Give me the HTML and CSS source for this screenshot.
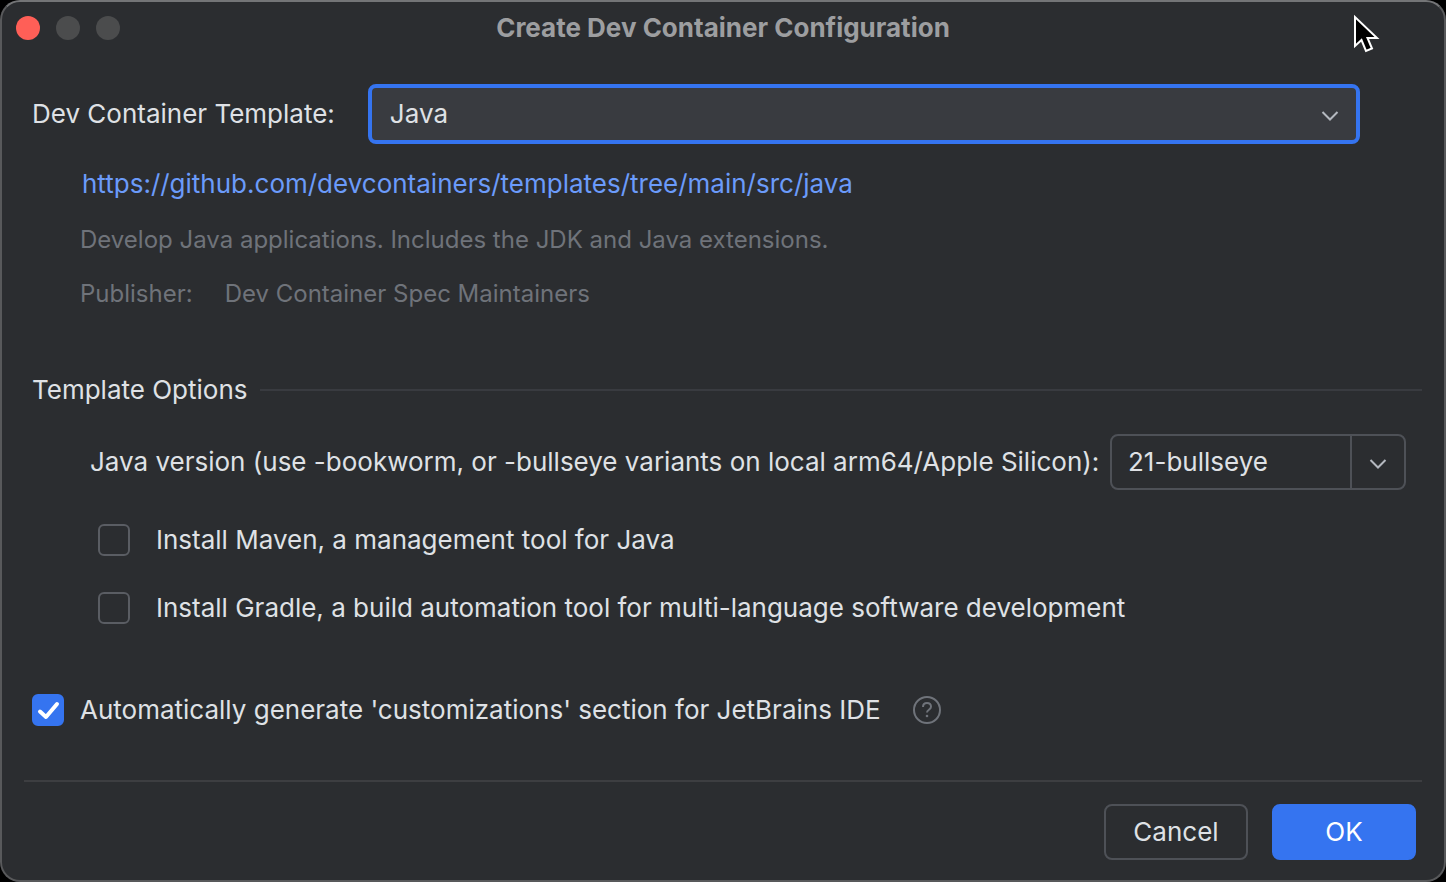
FILE: index.html
```html
<!DOCTYPE html>
<html lang="en">
<head>
  <meta charset="UTF-8">
  <meta name="viewport" content="width=device-width, initial-scale=1.0">
  <title>Create Dev Container Configuration</title>
  <link rel="stylesheet" href="styles.css">
</head>
<body>
  <form class="dialog">
    <header class="titlebar">
      <div class="lights">
        <button type="button" class="light close" aria-label="Close"></button>
        <button type="button" class="light" aria-label="Minimize" disabled></button>
        <button type="button" class="light" aria-label="Zoom" disabled></button>
      </div>
      <h1>Create Dev Container Configuration</h1>
    </header>

    <main class="content">
      <div class="template-row">
        <label for="template">Dev Container Template:</label>
        <div class="combo focused">
          <select id="template">
            <option>Java</option>
          </select>
          <span class="arrow">
            <svg width="18" height="12" viewBox="0 0 18 12"><path d="M1.500 2l7.500 7.500 7.500-7.500"/></svg>
          </span>
        </div>
      </div>

      <div class="details">
        <a href="https://github.com/devcontainers/templates/tree/main/src/java">https://github.com/devcontainers/templates/tree/main/src/java</a>
        <p>Develop Java applications. Includes the JDK and Java extensions.</p>
        <p class="publisher"><span>Publisher:</span><span>Dev Container Spec Maintainers</span></p>
      </div>

      <h2>Template Options</h2>

      <div class="options">
        <div class="version-row">
          <label for="version">Java version (use -bookworm, or -bullseye variants on local arm64/Apple Silicon):</label>
          <div class="combo split">
            <select id="version">
              <option>21-bullseye</option>
            </select>
            <span class="arrow">
              <svg width="18" height="12" viewBox="0 0 18 12"><path d="M1.500 2l7.500 7.500 7.500-7.500"/></svg>
            </span>
          </div>
        </div>
        <div class="check-row">
          <input type="checkbox" id="maven">
          <label for="maven">Install Maven, a management tool for Java</label>
        </div>
        <div class="check-row">
          <input type="checkbox" id="gradle">
          <label for="gradle">Install Gradle, a build automation tool for multi-language software development</label>
        </div>
      </div>

      <div class="check-row customizations">
        <span class="tick-box">
          <input type="checkbox" id="customizations" checked>
          <svg class="tick" width="32" height="32" viewBox="0 0 32 32"><path d="M8 17.500l6 5.500L25 10"/></svg>
        </span>
        <label for="customizations">Automatically generate 'customizations' section for JetBrains IDE</label>
        <button type="button" class="help" aria-label="Help">
          <svg width="28" height="28" viewBox="0 0 28 28">
            <circle cx="14" cy="14" r="13"/>
            <path d="M10 11c0-2.400 1.700-4 4-4s4 1.500 4 3.700c0 3-4 3.100-4 5.800"/>
            <circle class="dot" cx="14" cy="20" r="1.300"/>
          </svg>
        </button>
      </div>
    </main>

    <footer class="footer">
      <button type="button" class="btn">Cancel</button>
      <button type="submit" class="btn primary">OK</button>
    </footer>
  </form>

  <svg class="cursor" width="30" height="42" viewBox="0 0 30 42">
    <path d="M3 3v29l6.500-6 4.500 11 6-2.500-4.500-10.500H25z"/>
  </svg>
</body>
</html>
```
FILE: styles.css
```css
* {
  box-sizing: border-box;
}
body {
  margin: 0;
  background: #000;
  color: #dfe1e5;
  font-family: Inter, sans-serif;
  font-size: 26px;
  line-height: 32px;
}
h1, h2, p {
  margin: 0;
}
button, select, input {
  margin: 0;
  font: inherit;
  color: inherit;
}
.dialog {
  display: flex;
  flex-direction: column;
  min-height: 100vh;
  background: #2b2d30;
  border: 2px solid #58595b;
  border-top-color: #747577;
  border-radius: 20px;
}

/* Title bar */
.titlebar {
  display: grid;
  grid-template-columns: 1fr auto 1fr;
  align-items: center;
  height: 52px;
  padding: 0 14px;
}
.titlebar h1 {
  font-size: 26px;
  font-weight: 700;
  color: #9d9ea0;
}
.lights {
  display: flex;
  gap: 16px;
}
.light {
  width: 24px;
  height: 24px;
  padding: 0;
  border: none;
  border-radius: 50%;
  background: #4b4c4d;
}
.light.close {
  background: #ff5f57;
}

/* Content */
.content {
  padding: 30px 22px 0 30px;
}
.template-row {
  display: flex;
  align-items: center;
  gap: 33px;
  padding-right: 62px;
}
.combo {
  display: grid;
  border: 2px solid #4e5157;
  border-radius: 8px;
}
.combo select,
.combo .arrow {
  grid-area: 1 / 1;
}
.combo select {
  width: 100%;
  height: 52px;
  padding: 0 60px 0 16px;
  border: none;
  outline: none;
  background: transparent;
  appearance: none;
}
.combo .arrow {
  display: flex;
  align-items: center;
  justify-content: center;
  justify-self: end;
  width: 52px;
  padding-top: 4px;
  pointer-events: none;
}
.arrow svg {
  fill: none;
  stroke: #b4b8bf;
  stroke-width: 2;
}
.combo.focused {
  flex: 1;
  border: 4px solid #3574f0;
  background: #393b40;
}
.combo.focused select {
  padding-left: 18px;
}
.combo.split {
  width: 296px;
}
.combo.split .arrow {
  width: 54px;
  border-left: 2px solid #4e5157;
}

.details {
  margin-top: 24px;
  padding-left: 48px;
  color: #6f737a;
  font-size: 24px;
}
.details a {
  display: block;
  margin-bottom: 24px;
  padding-left: 2px;
  color: #6b9bfa;
  font-size: 26px;
  text-decoration: none;
}
.publisher {
  display: flex;
  gap: 32px;
  margin-top: 22px;
}
h2 {
  display: flex;
  align-items: center;
  gap: 12px;
  margin-top: 64px;
  font-size: 26px;
  font-weight: 400;
}
h2::after {
  content: "";
  flex: 1;
  height: 2px;
  background: #393b40;
}

.options {
  padding: 28px 16px 0 66px;
}
.version-row {
  display: flex;
  align-items: center;
  justify-content: space-between;
  margin: 0 0 34px -8px;
}
.check-row {
  display: flex;
  align-items: center;
}
.check-row + .check-row {
  margin-top: 36px;
}
.check-row label {
  margin-left: 26px;
}
input[type="checkbox"] {
  width: 32px;
  height: 32px;
  border: 2px solid #5a5d63;
  border-radius: 6px;
  background: transparent;
  appearance: none;
}
input[type="checkbox"]:checked {
  border-color: #3574f0;
  background: #3574f0;
}
.tick-box {
  display: grid;
}
.tick-box > * {
  grid-area: 1 / 1;
}
.tick {
  fill: none;
  stroke: #fff;
  stroke-width: 4;
  stroke-linecap: round;
  stroke-linejoin: round;
  pointer-events: none;
}
input:not(:checked) + .tick {
  display: none;
}
.customizations {
  margin-top: 70px;
}
.customizations label {
  margin-left: 16px;
}
.help {
  display: flex;
  margin-left: 32px;
  padding: 0;
  border: none;
  background: none;
}
.help svg {
  fill: none;
  stroke: #6f737a;
  stroke-width: 2;
}
.help .dot {
  fill: #6f737a;
  stroke: none;
}

/* Footer */
.footer {
  display: flex;
  justify-content: flex-end;
  gap: 24px;
  margin: auto 22px 0;
  padding: 22px 6px 20px;
  border-top: 2px solid #3d3e41;
}
.btn {
  width: 144px;
  height: 56px;
  padding: 0;
  border: 2px solid #4e5157;
  border-radius: 8px;
  background: transparent;
}
.btn.primary {
  border-color: #3574f0;
  background: #3574f0;
  color: #fff;
}

/* Mouse pointer */
.cursor {
  position: absolute;
  top: 14px;
  right: 64px;
  fill: #000;
  stroke: #fff;
  stroke-width: 2;
  pointer-events: none;
}
```
